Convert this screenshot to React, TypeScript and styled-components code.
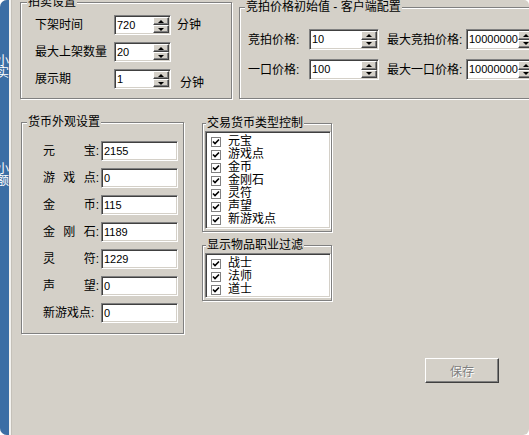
import styled, { createGlobalStyle } from "styled-components";

const GlobalStyle = createGlobalStyle`
  html, body {
    margin: 0;
    padding: 0;
    background: #fff;
  }
  body {
    font-family: "Liberation Sans", "Noto Sans CJK SC", sans-serif;
    font-size: 12px;
    color: #000;
  }
`;

const Window = styled.div`
  display: flex;
  width: 529px;
  height: 435px;
  overflow: hidden;
  background: #d4d0c8;
  border-radius: 7px 5px 6px 7px;
`;

const SideTabs = styled.nav`
  flex: 0 0 9px;
  display: flex;
  flex-direction: column;
  gap: 84px;
  padding-top: 55px;
  overflow: hidden;
  background: #3b6ea5;
`;

const SideTab = styled.span`
  width: 12px;
  margin-left: -3px;
  color: #fff;
  font-size: 12px;
  line-height: 12px;
`;

const Divider = styled.div`
  flex: 0 0 3px;
  box-sizing: border-box;
  border-left: 2px solid #f3f2ef;
  border-right: 1px solid #c4c0b8;
`;

const Main = styled.main`
  flex: 1;
  min-width: 0;
  display: flex;
  flex-direction: column;
  padding-left: 8px;
`;

const TopRow = styled.div`
  display: flex;
  align-items: flex-start;
  gap: 7px;
  margin-top: -5px;
`;

const SecondRow = styled.div`
  display: flex;
  align-items: flex-start;
  margin-top: 16px;
`;

const SideColumn = styled.div`
  display: flex;
  flex-direction: column;
  gap: 6px;
  margin: 1px 0 0 18px;
`;

const Group = styled.fieldset<{ $w: number; $h: number; $top?: number; $left?: number }>`
  flex: none;
  box-sizing: border-box;
  width: ${(p) => p.$w}px;
  height: ${(p) => p.$h}px;
  margin: ${(p) => p.$top ?? 0}px 0 0 ${(p) => p.$left ?? 0}px;
  padding: 0;
  min-inline-size: 0;
  border: 1px solid #808080;
  box-shadow: 1px 1px 0 #fff, inset 1px 1px 0 #fff;
`;

const Title = styled.legend<{ $x: number }>`
  margin-left: ${(p) => p.$x}px;
  padding: 0 1px;
  height: 14px;
  line-height: 14px;
  background: #d4d0c8;
  white-space: nowrap;
`;

const Rows = styled.div<{ $pt: number; $pl: number; $gap: number }>`
  display: flex;
  flex-direction: column;
  gap: ${(p) => p.$gap}px;
  padding: ${(p) => p.$pt}px 0 0 ${(p) => p.$pl}px;
`;

const Row = styled.div<{ $h?: number }>`
  display: flex;
  align-items: center;
  height: ${(p) => p.$h ?? 20}px;
`;

const FormLabel = styled.span<{ $w: number; $ml?: number }>`
  flex: none;
  width: ${(p) => p.$w}px;
  margin-left: ${(p) => p.$ml ?? 0}px;
  line-height: 14px;
  white-space: nowrap;
`;

const SpreadLabel = styled.span`
  flex: none;
  display: flex;
  justify-content: space-between;
  width: 56px;
  margin-right: 2px;
  line-height: 14px;
`;

const Unit = styled.span<{ $x: number; $y: number }>`
  margin-left: ${(p) => p.$x}px;
  padding-top: ${(p) => p.$y}px;
  line-height: 14px;
`;

const Field = styled.div<{ $w: number; $h: number }>`
  flex: none;
  box-sizing: border-box;
  display: flex;
  width: ${(p) => p.$w}px;
  height: ${(p) => p.$h}px;
  padding: 1px;
  border: 1px solid;
  border-color: #808080 #fff #fff #808080;
  box-shadow: inset 1px 1px 0 #404040, inset -1px -1px 0 #d4d0c8;
  background: #fff;
`;

const Value = styled.span`
  flex: 1;
  min-width: 0;
  align-self: center;
  padding-left: 1px;
  font-size: 11px;
  line-height: 13px;
  white-space: nowrap;
  overflow: hidden;
`;

const Spin = styled.div`
  flex: none;
  display: flex;
  flex-direction: column;
  width: 16px;
`;

const SpinButton = styled.span`
  flex: 1;
  display: flex;
  align-items: center;
  justify-content: center;
  box-sizing: border-box;
  background: #d4d0c8;
  border: 1px solid;
  border-color: #fff #404040 #404040 #fff;
  box-shadow: inset -1px -1px 0 #808080;
`;

const Arrow = styled.span<{ $dir: "up" | "down" }>`
  width: 0;
  height: 0;
  border-left: 3px solid transparent;
  border-right: 3px solid transparent;
  ${(p) => (p.$dir === "up" ? "border-bottom: 3px solid #000;" : "border-top: 3px solid #000;")}
`;

const CheckList = styled.ul<{ $h: number }>`
  list-style: none;
  margin: 0;
  box-sizing: border-box;
  width: 126px;
  height: ${(p) => p.$h}px;
  padding: 3px 0 0 5px;
  background: #fff;
  border: 1px solid;
  border-color: #808080 #fff #fff #808080;
  box-shadow: inset 1px 1px 0 #404040, inset -1px -1px 0 #d4d0c8;
`;

const CheckItem = styled.li`
  display: flex;
  align-items: center;
  gap: 7px;
  height: 13px;
  line-height: 13px;
`;

const BottomBar = styled.div`
  display: flex;
  justify-content: flex-end;
  margin-top: 24px;
  padding-right: 30px;
`;

const SaveButton = styled.button`
  box-sizing: border-box;
  width: 74px;
  height: 25px;
  padding: 0;
  font: inherit;
  color: #808080;
  text-shadow: 1px 1px 0 #fff;
  background: #d4d0c8;
  border: 1px solid;
  border-color: #fff #404040 #404040 #fff;
  box-shadow: inset -1px -1px 0 #808080;
`;

function SpinField({ value, w, h = 20 }: { value: string; w: number; h?: number }) {
  return (
    <Field $w={w} $h={h}>
      <Value>{value}</Value>
      <Spin>
        <SpinButton>
          <Arrow $dir="up" />
        </SpinButton>
        <SpinButton>
          <Arrow $dir="down" />
        </SpinButton>
      </Spin>
    </Field>
  );
}

function CheckMark() {
  return (
    <svg width="10" height="10" viewBox="0 0 10 10">
      <rect x="0.5" y="0.5" width="9" height="9" fill="#fff" stroke="#808080" />
      <path d="M2 4.5 L4 6.5 L8 2.5" fill="none" stroke="#000" strokeWidth="1.6" />
    </svg>
  );
}

const auctionRows = [
  { label: "下架时间", value: "720", unit: "分钟", ux: 6, uy: 0 },
  { label: "最大上架数量", value: "20" },
  { label: "展示期", value: "1", unit: "分钟", ux: 9, uy: 8 },
];

const currencyRows = [
  { parts: ["元", "宝:"], value: "2155" },
  { parts: ["游", "戏", "点:"], value: "0" },
  { parts: ["金", "币:"], value: "115" },
  { parts: ["金", "刚", "石:"], value: "1189" },
  { parts: ["灵", "符:"], value: "1229" },
  { parts: ["声", "望:"], value: "0" },
  { parts: ["新游戏点:"], value: "0" },
];

const tradeTypes = ["元宝", "游戏点", "金币", "金刚石", "灵符", "声望", "新游戏点"];
const jobs = ["战士", "法师", "道士"];

export default function App() {
  return (
    <>
      <GlobalStyle />
      <Window>
        <SideTabs>
          <SideTab>小实</SideTab>
          <SideTab>小额</SideTab>
        </SideTabs>
        <Divider />
        <Main>
          <TopRow>
            <Group $w={212} $h={104}>
              <Title $x={6}>拍卖设置</Title>
              <Rows $pt={6} $pl={14} $gap={7}>
                {auctionRows.map((r) => (
                  <Row key={r.label}>
                    <FormLabel $w={79}>{r.label}</FormLabel>
                    <SpinField value={r.value} w={57} />
                    {r.unit && (
                      <Unit $x={r.ux ?? 0} $y={r.uy ?? 0}>
                        {r.unit}
                      </Unit>
                    )}
                  </Row>
                ))}
              </Rows>
            </Group>

            <Group $w={320} $h={99} $top={5}>
              <Title $x={5}>竞拍价格初始值 - 客户端配置</Title>
              <Rows $pt={15} $pl={8} $gap={9}>
                <Row $h={21}>
                  <FormLabel $w={61}>竞拍价格:</FormLabel>
                  <SpinField value="10" w={70} h={21} />
                  <FormLabel $w={79} $ml={8}>最大竞拍价格:</FormLabel>
                  <SpinField value="10000000" w={70} h={21} />
                </Row>
                <Row $h={21}>
                  <FormLabel $w={61}>一口价格:</FormLabel>
                  <SpinField value="100" w={70} h={21} />
                  <FormLabel $w={79} $ml={8}>最大一口价格:</FormLabel>
                  <SpinField value="10000000" w={70} h={21} />
                </Row>
              </Rows>
            </Group>
          </TopRow>

          <SecondRow>
            <Group $w={163} $h={219} $left={1}>
              <Title $x={5}>货币外观设置</Title>
              <Rows $pt={12} $pl={21} $gap={7}>
                {currencyRows.map((r) => (
                  <Row key={r.parts.join("")}>
                    <SpreadLabel>
                      {r.parts.map((c) => (
                        <span key={c}>{c}</span>
                      ))}
                    </SpreadLabel>
                    <Field $w={77} $h={20}>
                      <Value>{r.value}</Value>
                    </Field>
                  </Row>
                ))}
              </Rows>
            </Group>

            <SideColumn>
              <Group $w={130} $h={116}>
                <Title $x={3}>交易货币类型控制</Title>
                <Rows $pt={1} $pl={2} $gap={0}>
                  <CheckList $h={98}>
                    {tradeTypes.map((t) => (
                      <CheckItem key={t}>
                        <CheckMark />
                        {t}
                      </CheckItem>
                    ))}
                  </CheckList>
                </Rows>
              </Group>

              <Group $w={130} $h={63}>
                <Title $x={3}>显示物品职业过滤</Title>
                <Rows $pt={1} $pl={2} $gap={0}>
                  <CheckList $h={45}>
                    {jobs.map((t) => (
                      <CheckItem key={t}>
                        <CheckMark />
                        {t}
                      </CheckItem>
                    ))}
                  </CheckList>
                </Rows>
              </Group>
            </SideColumn>
          </SecondRow>

          <BottomBar>
            <SaveButton disabled>保存</SaveButton>
          </BottomBar>
        </Main>
      </Window>
    </>
  );
}
